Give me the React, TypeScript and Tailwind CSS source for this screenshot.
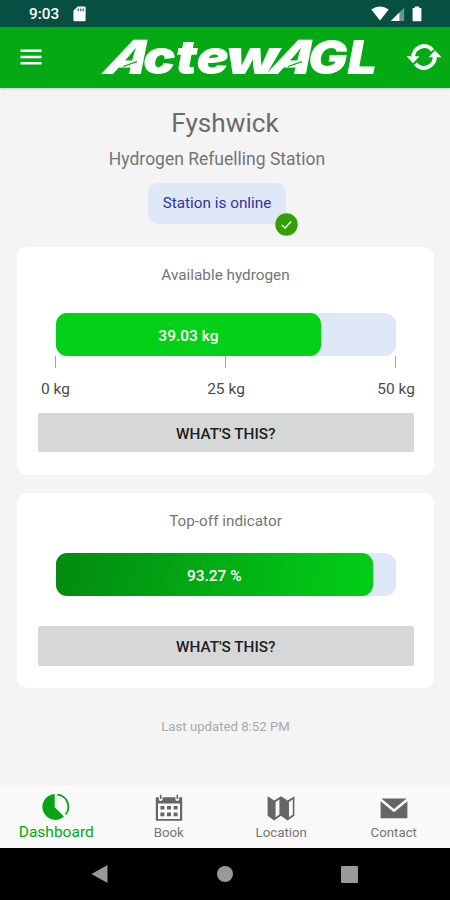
import type { ReactNode } from 'react'

interface NavItem {
  label: string
  icon: ReactNode
  active?: boolean
}

const DashboardIcon = () => (
  <svg width="28" height="28" viewBox="0 0 28 28" fill="currentColor">
    <path d="M12.7 .9V14.2L22 23.6A13 13 0 1 1 12.7 .9Z" />
    <path d="M15.4 1.6A12.2 12.2 0 0 1 23.6 21.4" fill="none" stroke="currentColor" strokeWidth="1.8" />
  </svg>
)

const BookIcon = () => (
  <svg width="28" height="28" viewBox="0 0 28 28" fill="currentColor">
    <path
      fillRule="evenodd"
      d="M.8 4.2H3.8V6A1.9 1.9 0 0 0 7.6 6V4.2H20.4V6A1.9 1.9 0 0 0 24.2 6V4.2H27.2V27.8H.8ZM3 10.4V26H25V10.4Z"
    />
    <path d="M4.9 1.8H6.5V6H4.9ZM21.5 1.8H23.1V6H21.5Z" />
    <path d="M5.4 13H9.4V16.6H5.4ZM12 13H16V16.6H12ZM18.6 13H22.6V16.6H18.6ZM5.4 19.6H9.4V23.2H5.4ZM12 19.6H16V23.2H12ZM18.6 19.6H22.6V23.2H18.6Z" />
  </svg>
)

const LocationIcon = () => (
  <svg width="28" height="28" viewBox="0 0 28 28">
    <path d="M.6 3.2L7.2 7.4L14 3.2L20.6 7.4L27.4 3.2V22.8L20.6 27.4L14 22.8L7.2 27.4L.6 22.8Z" fill="#666" />
    <path d="M8.6 9L12.4 6.6V21.6L8.6 24.2ZM22 9L25.8 6.6V21.6L22 24.2Z" fill="#fafafa" />
  </svg>
)

const ContactIcon = () => (
  <svg width="28" height="28" viewBox="0 0 28 28" fill="currentColor">
    <path d="M1.4 5.6H26.6L14 16Z" />
    <path d="M.6 8.2L14 19.2L27.4 8.2V25.2H.6Z" />
  </svg>
)

const navItems: NavItem[] = [
  { label: 'Dashboard', icon: <DashboardIcon />, active: true },
  { label: 'Book', icon: <BookIcon /> },
  { label: 'Location', icon: <LocationIcon /> },
  { label: 'Contact', icon: <ContactIcon /> },
]

const scale = ['0 kg', '25 kg', '50 kg']

function Logo() {
  return (
    <svg
      width="278"
      height="60"
      viewBox="0 0 278 60"
      fill="#fff"
      className="overflow-visible font-['Inter',sans-serif] text-[47px] font-black"
    >
      <g transform="translate(0 47) skewX(-30)">
        <text x="0" y="0" textLength="42" lengthAdjust="spacingAndGlyphs">A</text>
      </g>
      <g className="italic">
        <text x="43" y="47" textLength="86" lengthAdjust="spacingAndGlyphs">cte</text>
        <text x="126" y="47" textLength="53" lengthAdjust="spacingAndGlyphs">w</text>
      </g>
      <g transform="translate(165 47) skewX(-30)">
        <text x="0" y="0" textLength="42" lengthAdjust="spacingAndGlyphs">A</text>
      </g>
      <text x="208" y="47" textLength="69" lengthAdjust="spacingAndGlyphs" className="italic">GL</text>
      {/* slits across both A bars */}
      <path d="M23 39.5L37 34.6M188 39.5L202 34.6" stroke="#03aa14" strokeWidth="1.2" />
    </svg>
  )
}

function Bar({ percent, text, fill }: { percent: number; text: string; fill: string }) {
  return (
    <div className="mr-[38px] ml-[38.5px] h-[43.5px] rounded-[11px] bg-[#dfe8f7]">
      <div
        className={`flex h-full items-center justify-center rounded-[11px] pt-[4px] text-[15.5px] font-medium text-white ${fill}`}
        style={{ width: `${percent}%` }}
      >
        {text}
      </div>
    </div>
  )
}

function WhatsThis() {
  return (
    <button className="mr-[20.5px] ml-[21px] h-[39.5px] rounded-xs bg-[#d6d8d7] pt-[4px] text-[15.3px] font-medium text-[#1c1c1c]">
      WHAT'S THIS?
    </button>
  )
}

export default function App() {
  return (
    <div className="flex h-[900px] w-[450px] flex-col overflow-hidden bg-[#f4f4f4] font-['Roboto',sans-serif]">
      {/* Status bar */}
      <div className="flex h-[27px] shrink-0 items-center bg-[#064f43] pt-px pr-[27px] pl-[29px] text-white">
        <span className="pt-px text-[15.3px] font-medium">9:03</span>
        <svg className="ml-3.5" width="13" height="16" viewBox="0 0 13 16">
          <path d="M4.6 .5H11.5Q12.6 .5 12.6 1.6V14Q12.6 15.2 11.4 15.2H1.6Q.4 15.2 .4 14V4.8Z" fill="#fff" />
          <path d="M5.2 2.6V5.2M7.8 2.6V5.2M10.2 2.6V5.2" stroke="#064f43" strokeWidth="1.1" />
        </svg>
        <svg className="ml-auto" width="52" height="16" viewBox="0 0 52 16" fill="#fff">
          <path d="M.3 3.6Q9 -2.6 17.7 3.6L9 14.5Z" />
          <path d="M33.2 1.6V14.9H19.9Z" opacity=".4" />
          <path d="M28.4 6.4V14.9H19.9Z" />
          <path d="M43.8 1.9V.5H48.2V1.9H50.4V15.2H41.6V1.9Z" />
        </svg>
      </div>

      {/* Header */}
      <header className="flex h-[60.5px] shrink-0 items-center bg-[#03aa14] shadow-[0_1px_2px_rgba(0,0,0,0.18)]">
        <svg className="ml-5" width="22" height="16" viewBox="0 0 22 16">
          <path d="M.5 1.8H21.5M.5 8H21.5M.5 14.2H21.5" stroke="#fff" strokeWidth="2.4" />
        </svg>
        <div className="ml-[58px]">
          <Logo />
        </div>
        <svg className="ml-[28px]" width="36" height="30" viewBox="0 0 36 30">
          <path d="M7.2 15.5A10.9 10.9 0 0 1 26.6 8.2" fill="none" stroke="#fff" strokeWidth="4" />
          <path d="M28.8 14.5A10.9 10.9 0 0 1 9.4 21.8" fill="none" stroke="#fff" strokeWidth="4" />
          <path d="M.6 14.2H13.4L7 21.2ZM22.6 15.2H35.4L29 8.2Z" fill="#fff" />
        </svg>
      </header>

      <main className="flex flex-1 flex-col items-center">
        <h1 className="mt-[20px] text-[26.2px] leading-[31px] text-[#6b6b6b]">Fyshwick</h1>
        <p className="mt-[10px] mr-4 text-[17.5px] leading-[21px] text-[#757575]">Hydrogen Refuelling Station</p>
        <div className="relative mt-[13px] mr-4 flex h-[41px] w-[138px] items-center justify-center rounded-[10px] bg-[#dfe8f7] pt-px text-[15.3px] text-[#33339a]">
          Station is online
          <svg className="absolute -right-[12px] -bottom-[12px]" width="23" height="23" viewBox="0 0 23 23">
            <circle cx="11.5" cy="11.5" r="11.2" fill="#35a003" />
            <path d="M6.8 12L10 15L16.2 8.6" fill="none" stroke="#fff" strokeWidth="1.4" />
          </svg>
        </div>

        {/* Available hydrogen */}
        <section className="mt-[23px] ml-px flex h-[228px] w-[417px] flex-col rounded-[10px] bg-white">
          <h2 className="mt-[18px] text-center text-[15.3px] leading-[20px] text-[#757575]">Available hydrogen</h2>
          <div className="mt-[28px]">
            <Bar percent={78.06} text="39.03 kg" fill="bg-[#02d117]" />
          </div>
          <div className="mx-[38px] flex h-[11.5px] justify-between">
            {scale.map((mark) => (
              <span key={mark} className="w-px bg-[#a3a3a3]" />
            ))}
          </div>
          <div className="mr-[19px] ml-6 mt-[11px] grid grid-cols-[1fr_auto_1fr] text-[15.5px] leading-5 text-[#4c4c4c]">
            <span>{scale[0]}</span>
            <span className="-translate-x-[2px]">{scale[1]}</span>
            <span className="text-right">{scale[2]}</span>
          </div>
          <div className="mt-[14px] flex flex-col">
            <WhatsThis />
          </div>
        </section>

        {/* Top-off indicator */}
        <section className="mt-[18px] ml-px flex h-[195px] w-[417px] flex-col rounded-[10px] bg-white">
          <h2 className="mt-[18px] text-center text-[15.3px] leading-[20px] text-[#757575]">Top-off indicator</h2>
          <div className="mt-[22px]">
            <Bar percent={93.27} text="93.27 %" fill="bg-linear-[100deg,#028a10,#02cf17]" />
          </div>
          <div className="mt-[30px] flex flex-col">
            <WhatsThis />
          </div>
        </section>

        <p className="mt-[31px] ml-px text-[13.2px] leading-4 text-[#a9a9a9]">Last updated 8:52 PM</p>
      </main>

      {/* Bottom navigation */}
      <nav className="grid h-[62px] shrink-0 grid-cols-4 bg-[#fafafa]">
        {navItems.map(({ label, icon, active }) => (
          <a
            key={label}
            href="#"
            className={`flex flex-col items-center pt-[7px] ${active ? 'text-[#06a516]' : 'text-[#666]'}`}
          >
            {icon}
            <span
              className={active ? 'mt-px text-[15.5px] leading-5' : 'mt-[2px] text-[13.3px] leading-5 text-[#757575]'}
            >
              {label}
            </span>
          </a>
        ))}
      </nav>

      {/* System buttons */}
      <div className="flex h-[52px] shrink-0 items-center bg-black pl-[91px]">
        <svg width="17" height="18" viewBox="0 0 17 18" fill="#999">
          <path d="M16.5 0V18L.5 9Z" />
        </svg>
        <div className="ml-[109px] h-4 w-4 rounded-full bg-[#999]" />
        <div className="ml-[108px] h-[17px] w-[17px] rounded-[1px] bg-[#999]" />
      </div>
    </div>
  )
}
